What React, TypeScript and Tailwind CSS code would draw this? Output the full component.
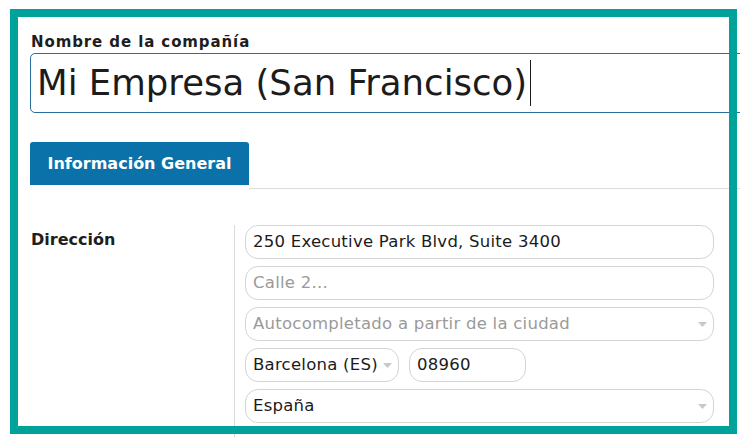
import React from "react";

const font = { fontFamily: "'DejaVu Sans', Inter, sans-serif" };

const Caret = () => (
  <svg width="9" height="5" viewBox="0 0 9 5" className="shrink-0">
    <path d="M0 0h9L4.5 5z" fill="#c8c8c8" />
  </svg>
);

interface FieldProps {
  value: string;
  placeholder?: boolean;
  select?: boolean;
  className?: string;
}

const Field = ({ value, placeholder, select, className }: FieldProps) => (
  <div
    className={`h-[34px] flex items-center justify-between pl-[7px] pr-[6px] border border-[#d4d4d4] rounded-[13px] text-[16.5px] tracking-[0.25px] ${
      placeholder ? "text-[#9a9a9a]" : "text-[#1b1b1b]"
    } ${className ?? ""}`}
  >
    <span className="whitespace-nowrap overflow-hidden">{value}</span>
    {select && <Caret />}
  </div>
);

export default function App() {
  return (
    <div className="relative w-[740px] h-[437px] overflow-hidden bg-white" style={font}>
      <div className="pl-[30px] pt-[31px] w-[780px]">
        <div className="h-[22px] leading-[22px] text-[15px] tracking-[0.9px] font-bold text-[#1e1e1e] pl-px">
          Nombre de la compañía
        </div>
        <div className="h-[60px] border border-[#2a6e9c] rounded-[5px] flex items-center pl-[6px]">
          <span className="text-[35.5px] text-[#1c1c1c] whitespace-nowrap">Mi Empresa (San Francisco)</span>
          <span className="ml-[3px] w-px h-[46px] bg-[#1c1c1c]" />
        </div>

        <div className="flex items-start mt-[29px]">
          <div className="w-[219px] h-[43px] flex items-center justify-center bg-[#0b72a9] rounded-t-[3px] text-white text-[16px] font-bold">
            Información General
          </div>
          <div className="flex-1 h-[47px] border-b border-[#dcdcdc]" />
        </div>

        <div className="flex mt-[36px]">
          <div className="w-[204px] pt-[3px] pl-px text-[16px] font-bold text-[#1e1e1e]">Dirección</div>
          <div className="w-[480px] border-l border-[#dadada] pl-[10px] pb-[40px] flex flex-col gap-[7px]">
            <Field value="250 Executive Park Blvd, Suite 3400" />
            <Field value="Calle 2..." placeholder />
            <Field value="Autocompletado a partir de la ciudad" placeholder select />
            <div className="flex gap-[10px]">
              <Field value="Barcelona (ES)" select className="w-[154px] pr-[4px]" />
              <Field value="08960" className="w-[117px]" />
            </div>
            <Field value="España" select />
          </div>
        </div>
      </div>

      <div className="absolute left-[10px] top-[9px] w-[727px] h-[425px] border-8 border-[#00a29a] pointer-events-none" />
    </div>
  );
}
